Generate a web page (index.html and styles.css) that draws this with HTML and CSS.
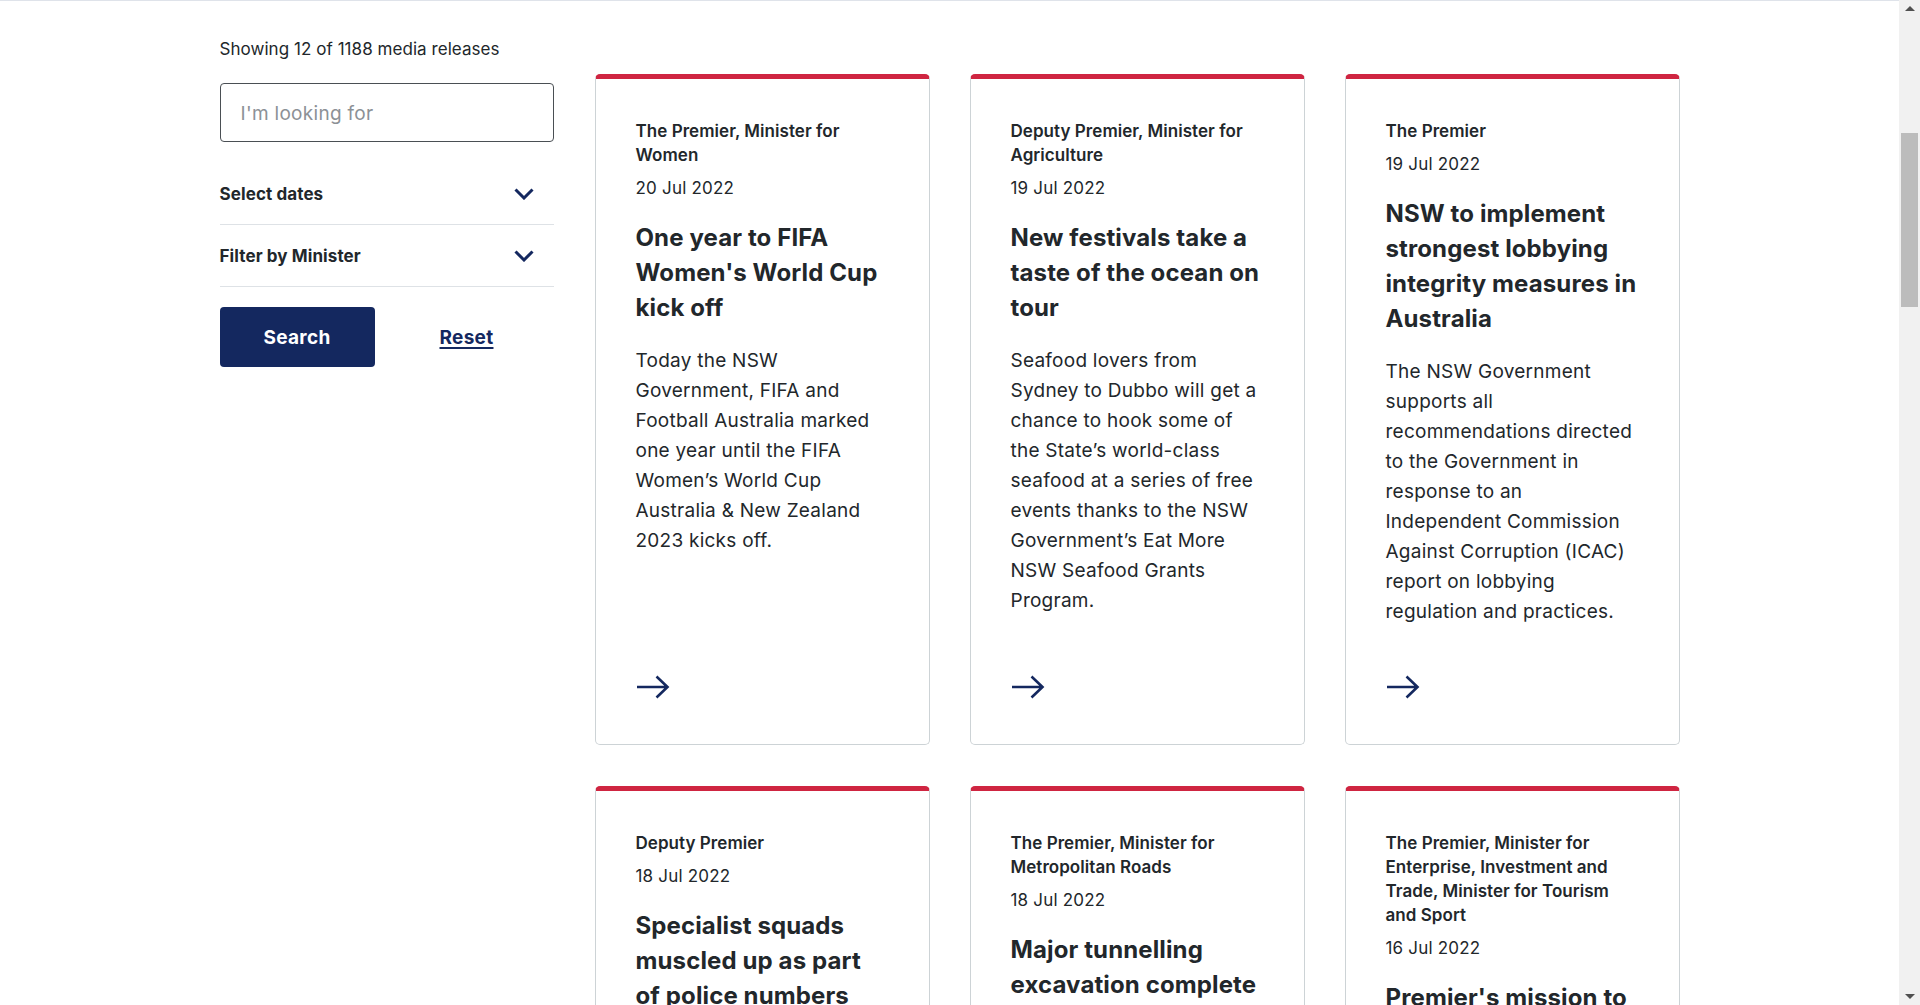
FILE: index.html
```html
<!DOCTYPE html>
<html lang="en">
<head>
<meta charset="utf-8">
<title>Media releases</title>
<link rel="stylesheet" href="styles.css">
</head>
<body>
<div class="app">
  <div class="viewport">
    <div class="topline"></div>
    <div class="container">
      <aside class="sidebar">
        <p class="count">Showing 12 of 1188 media releases</p>
        <form class="filters">
          <input class="search-input" type="text" placeholder="I'm looking for">
          <div class="accordion">
            <span>Select dates</span>
            <svg class="chevron" width="20" height="12" viewBox="0 0 20 12"><path d="M1.5 1.5 L10 10 L18.5 1.5" fill="none" stroke="#14285f" stroke-width="3"/></svg>
          </div>
          <div class="accordion">
            <span>Filter by Minister</span>
            <svg class="chevron" width="20" height="12" viewBox="0 0 20 12"><path d="M1.5 1.5 L10 10 L18.5 1.5" fill="none" stroke="#14285f" stroke-width="3"/></svg>
          </div>
          <div class="actions">
            <button class="btn-search" type="button">Search</button>
            <a class="reset" href="#">Reset</a>
          </div>
        </form>
      </aside>

      <main class="cards">
        <article class="card">
          <p class="minister">The Premier, Minister for Women</p>
          <p class="date">20 Jul 2022</p>
          <h3 class="title">One year to FIFA Women's World Cup kick off</h3>
          <p class="desc">Today the NSW Government, FIFA and Football Australia marked one year until the FIFA Women’s World Cup Australia &amp; New Zealand 2023 kicks off.</p>
          <div class="more"><svg width="34" height="24" viewBox="0 0 34 24"><path d="M1 12 H32 M20.5 1.5 L31.5 12 L20.5 22.5" fill="none" stroke="#14285f" stroke-width="2.6"/></svg></div>
        </article>
        <article class="card">
          <p class="minister">Deputy Premier, Minister for Agriculture</p>
          <p class="date">19 Jul 2022</p>
          <h3 class="title">New festivals take a taste of the ocean on tour</h3>
          <p class="desc">Seafood lovers from Sydney to Dubbo will get a chance to hook some of the State’s world-class seafood at a series of free events thanks to the NSW Government’s Eat More NSW Seafood Grants Program.</p>
          <div class="more"><svg width="34" height="24" viewBox="0 0 34 24"><path d="M1 12 H32 M20.5 1.5 L31.5 12 L20.5 22.5" fill="none" stroke="#14285f" stroke-width="2.6"/></svg></div>
        </article>
        <article class="card">
          <p class="minister">The Premier</p>
          <p class="date">19 Jul 2022</p>
          <h3 class="title">NSW to implement strongest lobbying integrity measures in Australia</h3>
          <p class="desc">The NSW Government supports all recommendations directed to the Government in response to an Independent Commission Against Corruption (ICAC) report on lobbying regulation and practices.</p>
          <div class="more"><svg width="34" height="24" viewBox="0 0 34 24"><path d="M1 12 H32 M20.5 1.5 L31.5 12 L20.5 22.5" fill="none" stroke="#14285f" stroke-width="2.6"/></svg></div>
        </article>
        <article class="card">
          <p class="minister">Deputy Premier</p>
          <p class="date">18 Jul 2022</p>
          <h3 class="title">Specialist squads muscled up as part of police numbers</h3>
          <p class="desc">More specialist police will be deployed across the State as part of the NSW Government’s commitment to boost police numbers.</p>
          <div class="more"><svg width="34" height="24" viewBox="0 0 34 24"><path d="M1 12 H32 M20.5 1.5 L31.5 12 L20.5 22.5" fill="none" stroke="#14285f" stroke-width="2.6"/></svg></div>
        </article>
        <article class="card">
          <p class="minister">The Premier, Minister for Metropolitan Roads</p>
          <p class="date">18 Jul 2022</p>
          <h3 class="title">Major tunnelling excavation complete</h3>
          <p class="desc">Tunnelling has been completed on one of the State’s largest infrastructure projects.</p>
          <div class="more"><svg width="34" height="24" viewBox="0 0 34 24"><path d="M1 12 H32 M20.5 1.5 L31.5 12 L20.5 22.5" fill="none" stroke="#14285f" stroke-width="2.6"/></svg></div>
        </article>
        <article class="card">
          <p class="minister">The Premier, Minister for Enterprise, Investment and Trade, Minister for Tourism and Sport</p>
          <p class="date">16 Jul 2022</p>
          <h3 class="title">Premier's mission to</h3>
          <p class="desc">The Premier will lead a delegation to promote NSW as a destination for trade and investment.</p>
          <div class="more"><svg width="34" height="24" viewBox="0 0 34 24"><path d="M1 12 H32 M20.5 1.5 L31.5 12 L20.5 22.5" fill="none" stroke="#14285f" stroke-width="2.6"/></svg></div>
        </article>
      </main>
    </div>
  </div>
  <div class="scrollbar">
    <div class="sb-arrow sb-up"></div>
    <div class="sb-track"><div class="sb-thumb"></div></div>
    <div class="sb-arrow sb-down"></div>
  </div>
</div>
</body>
</html>
```
FILE: styles.css
```css
* { box-sizing: border-box; }

html, body {
  margin: 0;
  height: 100%;
  overflow: hidden;
  background: #ffffff;
}

body {
  font-family: "Inter", "Noto Sans", sans-serif;
  color: #22272b;
}

.app {
  display: flex;
  height: 100vh;
}

.viewport {
  flex: 1;
  overflow: hidden;
}

.topline {
  height: 1px;
  background: #dfe3ea;
}

.container {
  width: 1460px;
  margin: 0 auto;
  padding-top: 36px;
  display: flex;
  align-items: flex-start;
  gap: 41px;
}

/* Sidebar */
.sidebar {
  width: 334px;
  flex: 0 0 334px;
}

.count {
  margin: 0 0 22px;
  font-size: 17px;
  line-height: 24px;
  letter-spacing: 0.05px;
}

.filters {
  margin: 0;
}

.search-input {
  display: block;
  width: 334px;
  height: 59px;
  border: 1px solid #4a4f54;
  border-radius: 4px;
  padding: 2px 20px 0;
  font-family: inherit;
  font-size: 19px;
  letter-spacing: 0.3px;
  color: #22272b;
  background: #fff;
  outline: none;
}

.search-input::placeholder {
  color: #8c9196;
}

.accordion {
  display: flex;
  align-items: center;
  justify-content: space-between;
  height: 62px;
  padding-right: 20px;
  border-bottom: 1px solid #dee2e6;
  font-size: 17px;
  font-weight: 700;
  letter-spacing: 0.1px;
}

.filters .accordion:first-of-type {
  margin-top: 21px;
}

.chevron {
  display: block;
  margin-top: 1px;
}

.actions {
  display: flex;
  align-items: center;
  margin-top: 20px;
}

.btn-search {
  width: 155px;
  height: 60px;
  border: none;
  border-radius: 4px;
  background: #14285f;
  color: #ffffff;
  font-family: inherit;
  font-size: 19px;
  font-weight: 700;
  letter-spacing: 0.3px;
  padding: 0;
  cursor: pointer;
}

.reset {
  margin-left: 65px;
  color: #14285f;
  font-size: 19px;
  font-weight: 700;
  letter-spacing: 0.3px;
  text-decoration: underline;
  text-underline-offset: 3px;
  text-decoration-thickness: 1.5px;
}

/* Cards */
.cards {
  margin-top: 37px;
  display: grid;
  grid-template-columns: repeat(3, 335px);
  column-gap: 40px;
  row-gap: 41px;
}

.card {
  display: flex;
  flex-direction: column;
  border: 1px solid #cdd3d6;
  border-top: 5px solid #cf2541;
  border-radius: 5px;
  padding: 40px 42px 45px 40px;
  background: #fff;
}

.card p, .card h3 {
  margin: 0;
}

.minister {
  font-size: 17px;
  line-height: 24px;
  font-weight: 600;
  letter-spacing: 0.05px;
}

.date {
  margin-top: 9px !important;
  font-size: 17px;
  line-height: 24px;
  letter-spacing: 0.2px;
}

.title {
  margin-top: 20px !important;
  font-size: 24px;
  line-height: 35px;
  font-weight: 700;
  letter-spacing: 0.12px;
}

.desc {
  margin-top: 21px !important;
  font-size: 19px;
  line-height: 30px;
  letter-spacing: 0.25px;
}

.more {
  margin-top: auto;
  padding-top: 48px;
}

.more svg {
  display: block;
}

/* Scrollbar */
.scrollbar {
  width: 21px;
  flex: 0 0 21px;
  background: #f1f1f1;
  display: flex;
  flex-direction: column;
}

.sb-arrow {
  height: 17px;
  display: flex;
  justify-content: center;
  align-items: center;
}

.sb-up::before {
  content: "";
  border-left: 5px solid transparent;
  border-right: 5px solid transparent;
  border-bottom: 5px solid #505050;
}

.sb-down::before {
  content: "";
  border-left: 5px solid transparent;
  border-right: 5px solid transparent;
  border-top: 5px solid #505050;
}

.sb-track {
  flex: 1;
  padding: 116px 2px 0;
}

.sb-thumb {
  height: 174px;
  background: #bcbcbc;
}
```
